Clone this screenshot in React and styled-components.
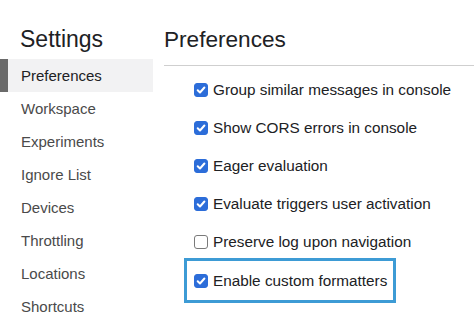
import React from 'react'
import styled, { createGlobalStyle } from 'styled-components'

const GlobalStyle = createGlobalStyle`
  * { box-sizing: border-box; }
  body {
    margin: 0;
    background: #fff;
    font-family: "Liberation Sans", Arial, sans-serif;
  }
`

const navItems = [
  'Preferences',
  'Workspace',
  'Experiments',
  'Ignore List',
  'Devices',
  'Throttling',
  'Locations',
  'Shortcuts',
]

const prefs = [
  { label: 'Group similar messages in console', checked: true },
  { label: 'Show CORS errors in console', checked: true },
  { label: 'Eager evaluation', checked: true },
  { label: 'Evaluate triggers user activation', checked: true },
  { label: 'Preserve log upon navigation', checked: false },
  { label: 'Enable custom formatters', checked: true, focused: true },
]

function App() {
  return (
    <>
      <GlobalStyle />
      <Layout>
        <Sidebar>
          <SidebarTitle>Settings</SidebarTitle>
          {navItems.map((item, index) =>
            <NavItem key={item} active={index === 0}>{item}</NavItem>
          )}
        </Sidebar>
        <Main>
          <PaneTitle>Preferences</PaneTitle>
          <Options>
            {prefs.map(pref =>
              <Option key={pref.label} focused={pref.focused}>
                <Box checked={pref.checked}>
                  {pref.checked &&
                    <svg width="10" height="10" viewBox="0 0 10 10">
                      <path d="M1.7 5.2 L4 7.5 L8.4 2.5" fill="none" stroke="#fff" strokeWidth="2" strokeLinecap="round" strokeLinejoin="round" />
                    </svg>}
                </Box>
                <Label>{pref.label}</Label>
              </Option>
            )}
          </Options>
        </Main>
      </Layout>
    </>
  )
}

const Layout = styled.div`
  display: flex;
  width: 474px;
  height: 321px;
  overflow: hidden;
`

const Sidebar = styled.nav`
  width: 153px;
  flex-shrink: 0;
  display: flex;
  flex-direction: column;
`

const SidebarTitle = styled.h1`
  margin: 0;
  flex-shrink: 0;
  height: 59px;
  padding: 26px 0 0 20px;
  font-size: 23px;
  line-height: 27px;
  font-weight: normal;
  color: #202124;
`

const NavItem = styled.div`
  height: 33px;
  flex-shrink: 0;
  display: flex;
  align-items: center;
  padding-left: 13px;
  border-left: 8px solid ${p => p.active ? '#6a6a6a' : 'transparent'};
  background: ${p => p.active ? '#f2f2f3' : 'transparent'};
  font-size: 15px;
  color: ${p => p.active ? '#202124' : '#4a4a4a'};
`

const Main = styled.main`
  flex: 1;
  margin-left: 11px;
  display: flex;
  flex-direction: column;
`

const PaneTitle = styled.h2`
  margin: 0;
  flex-shrink: 0;
  height: 66px;
  padding-top: 27px;
  font-size: 22.6px;
  line-height: 26px;
  font-weight: normal;
  color: #202124;
  border-bottom: 1px solid #cfcfcf;
`

const Options = styled.div`
  display: flex;
  flex-direction: column;
  align-items: flex-start;
  padding-top: 4.5px;
`

const Option = styled.label`
  height: 38.2px;
  flex-shrink: 0;
  display: flex;
  align-items: center;
  gap: 5px;
  margin-left: 23px;
  padding: 0 6px 0 7px;
  outline: ${p => p.focused ? '3px solid #3d9bd5' : 'none'};
`

const Box = styled.span`
  width: 14px;
  height: 14px;
  border-radius: 3px;
  display: flex;
  align-items: center;
  justify-content: center;
  background: ${p => p.checked ? '#2c6dd9' : '#fff'};
  border: 1px solid ${p => p.checked ? '#2c6dd9' : '#7a7a7a'};
`

const Label = styled.span`
  font-size: 15.3px;
  color: #202124;
  white-space: nowrap;
`

export default App
